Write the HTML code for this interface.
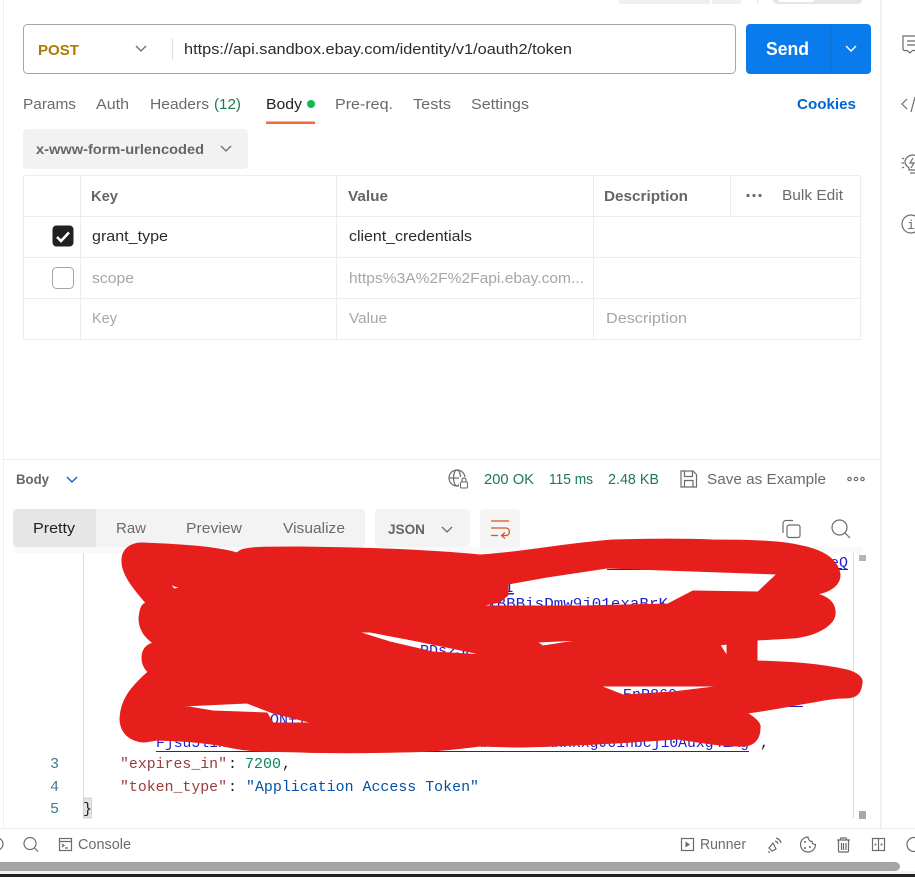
<!DOCTYPE html>
<html><head><meta charset="utf-8"><style>
html,body{margin:0;padding:0;background:#fff;width:915px;height:877px;overflow:hidden}
svg{display:block;position:absolute;left:0;top:0}
text{font-family:"Liberation Sans",sans-serif;font-size:15px;fill:#6b6b6b}
.b{font-weight:700;fill:#666}
.m{font-family:"Liberation Mono",monospace;font-size:15px}
.l{fill:#1f1fc8;text-decoration:underline}
.i{fill:none;stroke:#6b6b6b;stroke-width:1.2}
.c{fill:none;stroke:#6b6b6b;stroke-width:1.3}
</style></head><body>
<svg width="915" height="877" viewBox="0 0 915 877" xmlns="http://www.w3.org/2000/svg">
<!-- frame lines -->
<rect x="3" y="0" width="1" height="828" fill="#f0f0f0"/>
<rect x="880" y="0" width="1.500" height="828" fill="#ededed"/>
<rect x="3" y="459" width="877" height="1" fill="#ededed"/>
<rect x="0" y="828" width="915" height="1" fill="#ededed"/>
<!-- top clipped controls -->
<rect x="618" y="-6" width="124" height="10" rx="4" fill="#f0f0f0"/>
<rect x="710" y="-2" width="2" height="6" fill="#fff"/>
<rect x="757" y="0" width="1" height="4" fill="#e4e4e4"/>
<rect x="773" y="-6" width="89" height="10" rx="4" fill="#e6e6e6"/>
<rect x="778" y="-6" width="37" height="8" rx="3" fill="#fff"/>
<!-- URL bar -->
<rect x="23.500" y="24.500" width="712" height="49" rx="4" fill="#fff" stroke="#a6a6a6"/>
<text x="38" y="55" class="b" style="fill:#ad7a03" textLength="41" lengthAdjust="spacingAndGlyphs">POST</text>
<path d="M136 46l5 5 5-5" class="c"/>
<rect x="172" y="38" width="1" height="22" fill="#e0e0e0"/>
<text x="184" y="54" style="fill:#2b2b2b" textLength="388" lengthAdjust="spacingAndGlyphs">https://api.sandbox.ebay.com/identity/v1/oauth2/token</text>
<rect x="746" y="24" width="125" height="50" rx="4" fill="#097bed"/>
<rect x="830" y="24" width="1" height="50" fill="#0a6fd4"/>
<text x="766" y="55" class="b" style="fill:#fff;font-size:18px" textLength="43" lengthAdjust="spacingAndGlyphs">Send</text>
<path d="M846 46l5 5 5-5" fill="none" stroke="#fff" stroke-width="1.400"/>
<!-- tabs -->
<text x="23" y="109" textLength="53" lengthAdjust="spacingAndGlyphs">Params</text>
<text x="96" y="109" textLength="33" lengthAdjust="spacingAndGlyphs">Auth</text>
<text x="150" y="109" textLength="59" lengthAdjust="spacingAndGlyphs">Headers</text>
<text x="214" y="109" style="fill:#1d7a4f" textLength="27" lengthAdjust="spacingAndGlyphs">(12)</text>
<text x="266" y="109" style="fill:#212121" textLength="36" lengthAdjust="spacingAndGlyphs">Body</text>
<circle cx="311" cy="104" r="4" fill="#0cbb52"/>
<rect x="266" y="121.500" width="49" height="2.500" fill="#f26b3a"/>
<text x="335" y="109" textLength="58" lengthAdjust="spacingAndGlyphs">Pre-req.</text>
<text x="413" y="109" textLength="38" lengthAdjust="spacingAndGlyphs">Tests</text>
<text x="471" y="109" textLength="58" lengthAdjust="spacingAndGlyphs">Settings</text>
<text x="797" y="109" class="b" style="fill:#0265d2" textLength="59" lengthAdjust="spacingAndGlyphs">Cookies</text>
<!-- dropdown -->
<rect x="23" y="129" width="225" height="40" rx="4" fill="#f2f2f2"/>
<text x="36" y="154" class="b" style="font-size:14px" textLength="168" lengthAdjust="spacingAndGlyphs">x-www-form-urlencoded</text>
<path d="M221 146l5 5 5-5" class="c"/>
<!-- table -->
<g fill="#ededed">
<rect x="23" y="175" width="838" height="1"/>
<rect x="23" y="216" width="838" height="1"/>
<rect x="23" y="257" width="838" height="1"/>
<rect x="23" y="298" width="838" height="1"/>
<rect x="23" y="339" width="838" height="1"/>
<rect x="23" y="175" width="1" height="165"/>
<rect x="80" y="175" width="1" height="165"/>
<rect x="336" y="175" width="1" height="165"/>
<rect x="593" y="175" width="1" height="165"/>
<rect x="860" y="175" width="1" height="165"/>
<rect x="730" y="175" width="1" height="41"/>
</g>
<text x="91" y="201" class="b" textLength="27" lengthAdjust="spacingAndGlyphs">Key</text>
<text x="348" y="201" class="b" textLength="40" lengthAdjust="spacingAndGlyphs">Value</text>
<text x="604" y="201" class="b" textLength="84" lengthAdjust="spacingAndGlyphs">Description</text>
<circle cx="748" cy="195.500" r="1.600" fill="#6b6b6b"/><circle cx="754" cy="195.500" r="1.600" fill="#6b6b6b"/><circle cx="760" cy="195.500" r="1.600" fill="#6b6b6b"/>
<text x="782" y="200" textLength="61" lengthAdjust="spacingAndGlyphs">Bulk Edit</text>
<rect x="52.500" y="225.500" width="21" height="21" rx="4" fill="#212121"/>
<path d="M57 237l4 4 8-8.500" fill="none" stroke="#fff" stroke-width="2.600"/>
<text x="92" y="241" style="fill:#2b2b2b" textLength="76" lengthAdjust="spacingAndGlyphs">grant_type</text>
<text x="349" y="241" style="fill:#2b2b2b" textLength="123" lengthAdjust="spacingAndGlyphs">client_credentials</text>
<rect x="52.500" y="267.500" width="21" height="21" rx="4" fill="#fff" stroke="#a6a6a6"/>
<text x="92" y="283" style="fill:#a6a6a6" textLength="42" lengthAdjust="spacingAndGlyphs">scope</text>
<text x="349" y="283" style="fill:#a6a6a6" textLength="235" lengthAdjust="spacingAndGlyphs">https%3A%2F%2Fapi.ebay.com...</text>
<text x="92" y="323" style="fill:#a6a6a6" textLength="25" lengthAdjust="spacingAndGlyphs">Key</text>
<text x="349" y="323" style="fill:#a6a6a6" textLength="38" lengthAdjust="spacingAndGlyphs">Value</text>
<text x="606" y="323" style="fill:#a6a6a6" textLength="81" lengthAdjust="spacingAndGlyphs">Description</text>
<!-- response header -->
<text x="16" y="484" class="b" style="font-size:14px" textLength="33" lengthAdjust="spacingAndGlyphs">Body</text>
<path d="M67 477l5 5 5-5" fill="none" stroke="#0265d2" stroke-width="1.400"/>
<g fill="none" stroke="#6b6b6b" stroke-width="1.200">
<circle cx="457" cy="478" r="8"/><ellipse cx="457" cy="478" rx="3.500" ry="8"/><path d="M449 478h16"/>
</g>
<rect x="459" y="477" width="11" height="12" fill="#fff"/>
<rect x="460.500" y="482" width="7" height="6" rx="1" fill="#fff" stroke="#6b6b6b"/>
<path d="M462 482v-2a2 2 0 0 1 4 0v2" class="i"/>
<text x="484" y="484" style="fill:#1d7a4f" textLength="50" lengthAdjust="spacingAndGlyphs">200 OK</text>
<text x="549" y="484" style="fill:#1d7a4f" textLength="44" lengthAdjust="spacingAndGlyphs">115 ms</text>
<text x="608" y="484" style="fill:#1d7a4f" textLength="51" lengthAdjust="spacingAndGlyphs">2.48 KB</text>
<path d="M681 471h12l3.500 3.500V487h-15.500zM684.500 471v5.500h8V471M684.500 487v-6.500h8.500v6.500" class="i"/>
<text x="707" y="484" textLength="119" lengthAdjust="spacingAndGlyphs">Save as Example</text>
<circle cx="849.500" cy="479" r="1.700" class="i"/><circle cx="856" cy="479" r="1.700" class="i"/><circle cx="862.500" cy="479" r="1.700" class="i"/>
<!-- view tabs -->
<rect x="13" y="509" width="352" height="38" rx="4" fill="#f3f3f3"/>
<path d="M17 509h79v38H17a4 4 0 0 1-4-4v-30a4 4 0 0 1 4-4z" fill="#e6e6e6"/>
<text x="33" y="533" style="fill:#212121" textLength="42" lengthAdjust="spacingAndGlyphs">Pretty</text>
<text x="116" y="533" textLength="30" lengthAdjust="spacingAndGlyphs">Raw</text>
<text x="186" y="533" textLength="56" lengthAdjust="spacingAndGlyphs">Preview</text>
<text x="283" y="533" textLength="62" lengthAdjust="spacingAndGlyphs">Visualize</text>
<rect x="375" y="509" width="95" height="38" rx="4" fill="#f3f3f3"/>
<text x="388" y="534" class="b" style="font-size:14px" textLength="37" lengthAdjust="spacingAndGlyphs">JSON</text>
<path d="M442 527l5 5 5-5" class="c"/>
<rect x="480" y="509" width="40" height="40" rx="4" fill="#f5f5f5"/>
<path d="M491 521h18M491 528h15c4.500 0 4.500 7.500 0 7.500h-4M505 532.500l-3.500 3 3.500 3M491 535.500h7" fill="none" stroke="#d9541e" stroke-width="1.300"/>
<rect x="787" y="525" width="13" height="12.500" rx="2" class="i"/>
<path d="M783 533v-9.500a3 3 0 0 1 3-3h7" class="i"/>
<circle cx="839.500" cy="527.500" r="7.500" class="i"/><path d="M845 533l5 5" class="i"/>
<!-- editor -->
<rect x="13" y="547" width="850" height="6" fill="#f9f9f9"/>
<rect x="83" y="553" width="1" height="265" fill="#dcdcdc"/>
<rect x="853" y="553" width="1" height="265" fill="#dcdcdc"/>
<rect x="859" y="555" width="7" height="6" fill="#b5b5b5"/>
<rect x="859" y="811" width="7" height="8" fill="#a8a8a8"/>
<text x="830" y="567" class="m l" textLength="18" lengthAdjust="spacingAndGlyphs">eQ</text>
<rect x="607" y="569" width="241" height="1" fill="#1f1fc8"/>
<text x="505" y="592" class="m l">I</text>
<text x="468" y="608" class="m l" textLength="200" lengthAdjust="spacingAndGlyphs">xqxBBBisDmw9j01exaBrK</text>
<text x="420" y="655" class="m l">PDs2SFxx</text>
<text x="623" y="699" class="m l">EnP860</text>
<rect x="640" y="706" width="163" height="1" fill="#1f1fc8"/>
<text x="270" y="724" class="m l">ON+1</text>
<text x="156" y="747" class="m" style="fill:#1f1fc8" textLength="593" lengthAdjust="spacingAndGlyphs">Fjsu5l1xxxxxxxxxxxxxxxxxxxxxxxxxxxxxxxxxxxxxxxxxxgJ01nbcj10Auxg41Ag</text>
<rect x="156" y="751" width="593" height="1" fill="#1f1fc8"/>
<text x="760" y="747" class="m" style="fill:#212121">,</text>
<!-- scribble -->
<path fill="#e61e1c" fill-rule="evenodd" stroke="#e61e1c" stroke-width="1" stroke-linejoin="round" d="M122 562C121 550 130 543 142 543C170 544 215 546 237 553C243 547 255 547 300 547C380 548 440 551 480 555C520 553 560 544 613 540C650 539 690 539 713 540C750 540 780 541 797 545C820 549 838 558 840 575C840 585 830 592 817 594C832 598 836 606 835 615C833 626 815 636 793 638L757 640L757 661C785 662 815 663 847 670C858 673 863 678 862 683C861 693 857 698 845 698C830 698 820 701 813 702C790 706 765 711 747 713C757 719 761 724 760 728C760 738 755 745 745 746C725 747 700 742 677 739C620 743 560 746 523 747C500 747 490 746 480 746C450 750 420 752 400 752C360 753 330 753 300 752C280 751 260 752 247 750C235 749 225 746 217 745C195 741 175 741 157 740C150 741 147 742 143 742C130 741 120 733 120 718C121 700 130 688 148 672C144 668 142 663 142 658C142 650 146 645 153 643C145 637 139 630 139 618C140 608 142 604 146 603C135 590 122 575 122 562Z
M508 584L547 577L607 568L777 574L758 592L693 591L668 604L580 606L480 606L500 602L508 595Z
M358 632L370 632L417 641L485 655L433 652L390 642Z
M537 642L582 640L543 646Z
M720 645L727 644L727 656Z
M600 686L722 686L673 692L623 695Z
M183 706L247 703L273 713L313 723L273 723L267 713L213 711Z
M170 584L180 588L174 589Z"/>
<!-- code -->
<text x="50" y="768" class="m" style="fill:#3f7a8f">3</text>
<text x="50" y="791" class="m" style="fill:#3f7a8f">4</text>
<text x="50" y="813" class="m" style="fill:#3f7a8f">5</text>
<text x="120" y="768" class="m" style="fill:#9c3a3a" textLength="107" lengthAdjust="spacingAndGlyphs">"expires_in"</text>
<text x="228" y="768" class="m" style="fill:#212121">:</text>
<text x="245" y="768" class="m" style="fill:#098658" textLength="36" lengthAdjust="spacingAndGlyphs">7200</text>
<text x="282" y="768" class="m" style="fill:#212121">,</text>
<text x="120" y="791" class="m" style="fill:#9c3a3a" textLength="107" lengthAdjust="spacingAndGlyphs">"token_type"</text>
<text x="228" y="791" class="m" style="fill:#212121">:</text>
<text x="246" y="791" class="m" style="fill:#0451a5" textLength="233" lengthAdjust="spacingAndGlyphs">"Application Access Token"</text>
<rect x="83.500" y="798" width="8" height="20" fill="#e4e4e4" stroke="#c4c4c4" stroke-width=".7"/>
<text x="83" y="813" class="m" style="fill:#212121">}</text>
<!-- right sidebar icons -->
<path d="M917 36h-14v13a1.500 1.500 0 0 0 1.500 1.500h2.500l3 2.500 2.500-2.500H917M907 41h10M907 45h10" class="i"/>
<path d="M907 99l-5 5 5 5M915 97l-4 15" class="i"/>
<path d="M909 170v-2c-2-2-4-3-4-6 0-4 4-7 8-7s8 3 8 7c0 3-2 4-4 6v2z" class="i"/>
<path d="M913 158l-3 5h4l-3 5" class="i"/><path d="M910 173h6" class="i"/><path d="M902 158l2 1M901.500 163h2.500M902 168l2-1" class="i"/>
<circle cx="911" cy="224" r="9" class="i"/><text x="907" y="229" style="font-family:'Liberation Mono',monospace;font-size:13px">i</text>
<!-- status bar -->
<circle cx="-3" cy="844" r="6" class="i"/>
<circle cx="30" cy="843.500" r="6" class="i"/><path d="M34.500 848l3.500 3.500" class="i"/>
<rect x="59.500" y="838.500" width="12" height="12" class="i"/><path d="M59.500 841.500h12M62 844l2 1.500-2 1.500M65 848h3" class="i"/>
<text x="78" y="849" textLength="53" lengthAdjust="spacingAndGlyphs">Console</text>
<rect x="681.500" y="838.500" width="12" height="12" class="i"/><path d="M685.500 841.500l4.500 3-4.500 3z" fill="#6b6b6b"/>
<text x="700" y="849" textLength="46" lengthAdjust="spacingAndGlyphs">Runner</text>
<path d="M773 843l-4 5 3 3 4-2-3-6zM770 852l-2 0M775 841a4 4 0 0 1 3 3M776 838a7 7 0 0 1 5 5" class="i"/>
<path d="M808 837a7.500 7.500 0 1 0 7.500 7.500c-2 0-3.500-1-3.500-3-2 0-4-2-4-4.500z" class="i"/>
<circle cx="805" cy="842" r="1" fill="#6b6b6b"/><circle cx="810" cy="847" r="1" fill="#6b6b6b"/><circle cx="805" cy="848" r="1" fill="#6b6b6b"/>
<path d="M837 840h13M840 840l1-2h5l1 2M838.500 840v11a1 1 0 0 0 1 1h8a1 1 0 0 0 1-1v-11M841.500 843v7M843.500 843v7M846 843v7" class="i"/>
<rect x="872.500" y="838.500" width="12" height="12" class="i"/><path d="M878.500 838.500v12" class="i"/><circle cx="875.500" cy="844.500" r="1" fill="#6b6b6b"/><circle cx="881.500" cy="844.500" r="1" fill="#6b6b6b"/>
<circle cx="914" cy="844.500" r="7" class="i"/>
<!-- window scrollbar -->
<rect x="0" y="871" width="915" height="3" fill="#f4f4f4"/>
<rect x="-6" y="862" width="906" height="9" rx="4.500" fill="#a6a6a6"/>
<rect x="0" y="874" width="915" height="3" fill="#242424"/>
</svg>
</body></html>
